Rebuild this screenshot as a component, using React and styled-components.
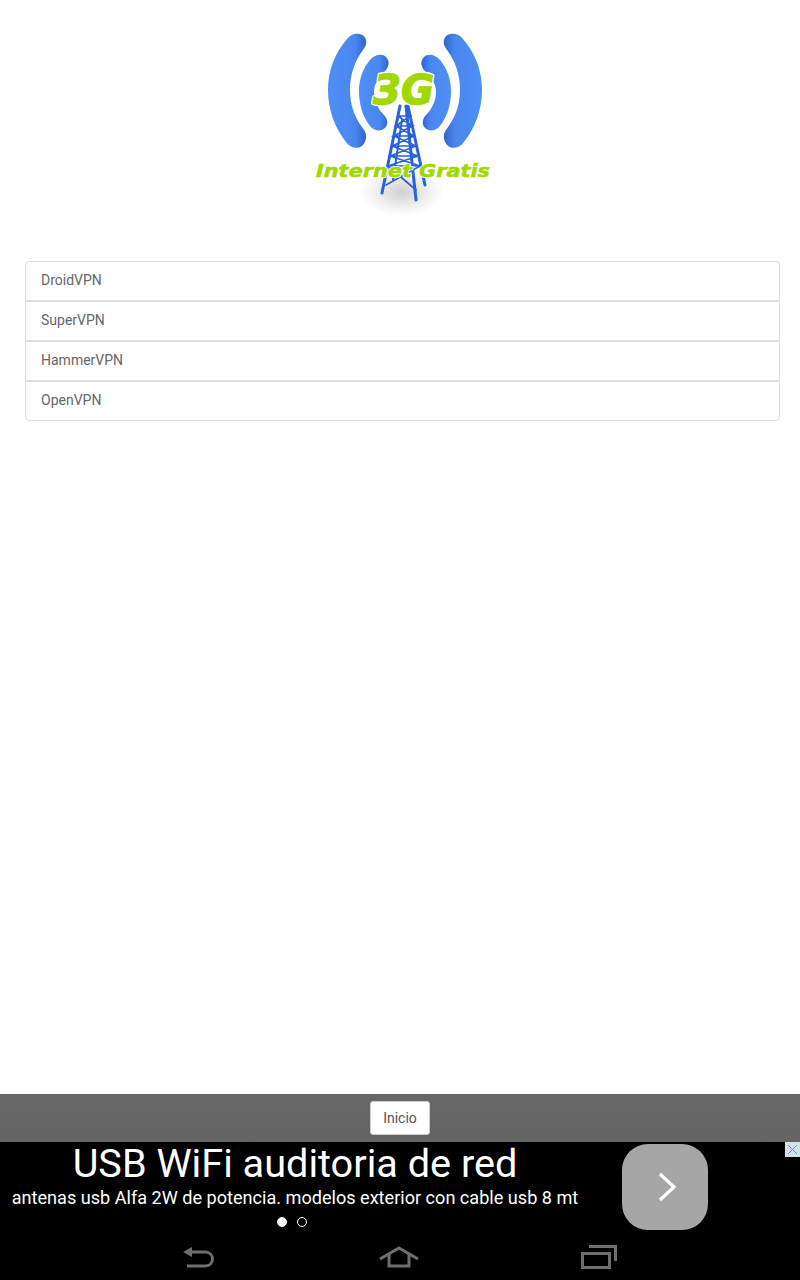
import styled, { createGlobalStyle } from 'styled-components';

const GlobalStyle = createGlobalStyle`
  html, body {
    margin: 0;
    padding: 0;
    background: #fff;
    font-family: Roboto, "Liberation Sans", sans-serif;
  }
`;

const Page = styled.div`
  display: flex;
  flex-direction: column;
  height: 1280px;
  overflow: hidden;
`;

const Main = styled.main`
  flex: 1;
  padding: 20px 20px 0 25px;
`;

const LogoWrap = styled.div`
  display: flex;
  justify-content: center;
  height: 241px;
`;

const LogoSvg = styled.svg`
  width: 210px;
  height: 200px;
  margin-left: 5px;
`;

const List = styled.div`
  display: flex;
  flex-direction: column;
`;

const ListItem = styled.a`
  display: block;
  height: 38px;
  line-height: 37px;
  padding: 0 15px;
  font-size: 14px;
  color: #666;
  background: #fff;
  border: 1px solid #ddd;
  border-radius: ${(p) =>
    p.$first ? '4px 4px 0 0' : p.$last ? '0 0 4px 4px' : '0'};
`;

const BottomBar = styled.div`
  display: flex;
  justify-content: center;
  align-items: center;
  height: 48px;
  background: linear-gradient(#686868, #646464);
`;

const HomeButton = styled.button`
  width: 60px;
  height: 34px;
  padding: 0;
  font-family: inherit;
  font-size: 14px;
  color: #555;
  background: #fff;
  border: 1px solid #ccc;
  border-radius: 3px;
`;

const Ad = styled.section`
  position: relative;
  display: flex;
  height: 96px;
  background: #000;
`;

const AdText = styled.div`
  width: 590px;
  margin-right: 32px;
  display: flex;
  flex-direction: column;
  align-items: center;
  color: #fff;
`;

const AdTitle = styled.div`
  font-size: 39.65px;
  line-height: 44px;
  height: 44px;
  white-space: nowrap;
`;

const AdSubtitle = styled.div`
  font-size: 18.1px;
  line-height: 24px;
  white-space: nowrap;
`;

const Dots = styled.div`
  display: flex;
  gap: 10px;
  margin-top: 7px;
  margin-right: 7px;
`;

const Dot = styled.span`
  box-sizing: border-box;
  width: 10px;
  height: 10px;
  border-radius: 50%;
  border: 1px solid #fff;
  background: ${(p) => (p.$active ? '#fff' : 'transparent')};
`;

const AdButton = styled.div`
  width: 86px;
  height: 86px;
  margin-top: 2px;
  border-radius: 26px;
  background: #a6a6a6;
  display: flex;
  align-items: center;
  justify-content: center;
`;

const Chevron = styled.svg`
  width: 20px;
  height: 30px;
  margin-left: 3px;
`;

const AdClose = styled.div`
  position: absolute;
  top: 0;
  right: 0;
  width: 15px;
  height: 15px;
  background: #d3e3e8;
  display: flex;
  align-items: center;
  justify-content: center;
`;

const NavBar = styled.nav`
  display: grid;
  grid-template-columns: repeat(3, 200px);
  justify-content: center;
  justify-items: center;
  align-items: center;
  height: 42px;
  padding: 0 2px 4px 0;
  box-sizing: border-box;
  background: #000;
`;

const LogoText = styled.text`
  font-family: "DejaVu Sans", sans-serif;
  font-weight: 700;
  font-style: italic;
  fill: #a0d800;
  stroke: #a0d800;
  stroke-width: 0.5px;
`;

const TextHalo = styled(LogoText)`
  fill: #fff;
  stroke: #fff;
  stroke-width: 2px;
  stroke-linejoin: round;
`;

const BigText = styled(LogoText)`
  stroke-width: 1.4px;
`;

const BigHalo = styled(TextHalo)`
  stroke-width: 4px;
`;

const OUTER = 'M47 19C52 12 64 12 66 20C67 24 65 27 63 30C54 42 50 56 50 70C50 86 55 98 64 110C67 114 67 120 63 125C58 130 50 128 46 122C35 108 28 90 28 70C28 50 35 33 47 19Z';
const INNER = 'M70 40C74 35 82 33 86 37C90 41 89 46 86 50C78 58 74 64 74 72C74 82 79 90 85 96C88 100 88 105 85 108C81 112 74 111 70 106C63 97 59 85 59 71C59 59 63 48 70 40Z';

function Logo() {
  const big = { x: 73, y: 84, fontSize: 40, textLength: 61, lengthAdjust: 'spacingAndGlyphs' };
  const small = { x: 16, y: 157, fontSize: 18, textLength: 174, lengthAdjust: 'spacingAndGlyphs' };

  return (
    <LogoSvg viewBox="0 0 210 200">
      <defs>
        <linearGradient id="waveLeft" x1="0" x2="1" y1="0" y2="0">
          <stop offset="0" stopColor="#4f8ff8" />
          <stop offset="0.7" stopColor="#4a86ee" />
          <stop offset="1" stopColor="#3263cf" />
        </linearGradient>
        <radialGradient id="shadow">
          <stop offset="0" stopColor="#d0d0d0" />
          <stop offset="0.6" stopColor="#eeeeee" />
          <stop offset="1" stopColor="#fff" />
        </radialGradient>
      </defs>
      <ellipse cx="102" cy="172" rx="42" ry="24" fill="url(#shadow)" />
      <g fill="url(#waveLeft)">
        <path d={OUTER} />
        <path d={INNER} />
      </g>
      <g fill="url(#waveLeft)" transform="translate(210 0) scale(-1 1)">
        <path d={OUTER} />
        <path d={INNER} />
      </g>
      {/* tower */}
      <g stroke="#2a62d8" fill="none" strokeLinecap="round">
        <path d="M100 86L82 173M108 86L125 165M106 86L116 180" strokeWidth="3" />
        <path d="M102 100L93 160" strokeWidth="2" />
        <path
          d="M98 96L110 96L96 106L112 106L94 116L114 116L92 126L116 126L90 136L118 136L88 146L120 146M98 96L112 106M96 106L114 116M94 116L116 126M92 126L118 136M90 136L120 146"
          strokeWidth="1.7"
        />
        <path d="M88 146L116 170M120 146L86 165" strokeWidth="1.7" />
      </g>
      <BigHalo {...big}>3G</BigHalo>
      <BigText {...big}>3G</BigText>
      <TextHalo {...small} aria-hidden="true">Internet Gratis</TextHalo>
      <LogoText {...small}>Internet Gratis</LogoText>
    </LogoSvg>
  );
}

const VPNS = ['DroidVPN', 'SuperVPN', 'HammerVPN', 'OpenVPN'];

export default function App() {
  return (
    <Page>
      <GlobalStyle />
      <Main>
        <LogoWrap>
          <Logo />
        </LogoWrap>
        <List>
          {VPNS.map((name, i) => (
            <ListItem key={name} $first={i === 0} $last={i === VPNS.length - 1}>
              {name}
            </ListItem>
          ))}
        </List>
      </Main>
      <BottomBar>
        <HomeButton>Inicio</HomeButton>
      </BottomBar>
      <Ad>
        <AdText>
          <AdTitle>USB WiFi auditoria de red</AdTitle>
          <AdSubtitle>antenas usb Alfa 2W de potencia. modelos exterior con cable usb 8 mt</AdSubtitle>
          <Dots>
            <Dot $active />
            <Dot />
          </Dots>
        </AdText>
        <AdButton>
          <Chevron viewBox="0 0 20 30">
            <path d="M3 2L17 15L3 28" fill="none" stroke="#fff" strokeWidth="3.2" />
          </Chevron>
        </AdButton>
        <AdClose>
          <svg width="11" height="11" viewBox="0 0 11 11">
            <path d="M1 1L10 10M10 1L1 10" stroke="#1cb4d8" strokeWidth="1" />
          </svg>
        </AdClose>
      </Ad>
      <NavBar>
        <svg width="32" height="22" viewBox="0 0 32 22">
          <path d="M0 6L9 1V11Z" fill="#6e6e6e" />
          <path d="M8 6H22C32 6 32 20 22 20H4" fill="none" stroke="#6e6e6e" strokeWidth="3" />
        </svg>
        <svg width="40" height="22" viewBox="0 0 40 22">
          <path d="M1 13L20 2L39 13" fill="none" stroke="#6e6e6e" strokeWidth="3" />
          <path d="M10 8V20H30V8" fill="none" stroke="#6e6e6e" strokeWidth="3" />
        </svg>
        <svg width="36" height="24" viewBox="0 0 36 24">
          <rect x="1.5" y="8.5" width="27" height="14" fill="none" stroke="#6e6e6e" strokeWidth="3" />
          <path d="M8 1.5H34.5V16" fill="none" stroke="#6e6e6e" strokeWidth="3" />
        </svg>
      </NavBar>
    </Page>
  );
}
